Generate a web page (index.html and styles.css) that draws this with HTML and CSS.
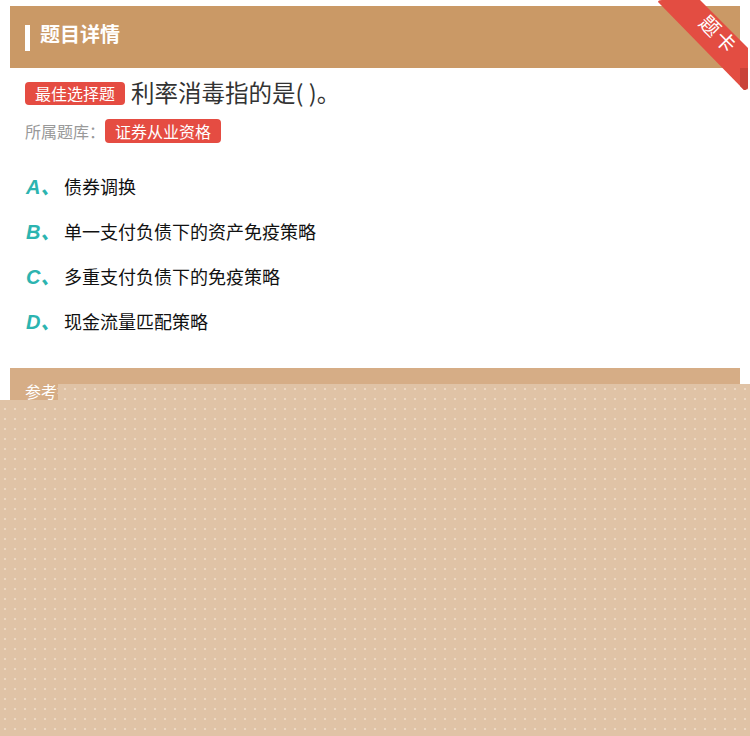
FILE: index.html
```
<!DOCTYPE html>
<html lang="zh">
<head>
<meta charset="utf-8">
<link rel="stylesheet" href="styles.css">
</head>
<body>
<div class="page">
  <div class="card-head">
    <span class="head-bar"></span>
    <span class="head-title">题目详情</span>
  </div>
  <div class="ribbon">
    <svg class="ribbon-svg" width="100" height="95" viewBox="0 0 100 95">
      <polygon points="98,66 90,68 98,90" fill="#b8372d"/>
      <path d="M8,2 Q8,0 12,0 L50,0 L98,48 L98,86 Q98,90 94,90 Z" fill="#e34d42"/>
      <path d="M90,68 L98,68 L98,86 Q98,90 94,90 L90,86 Z" fill="#c9433a"/>
    </svg>
    <span class="ribbon-text">题卡</span>
  </div>
  <div class="question">
    <div class="q-line">
      <span class="tag tag-type">最佳选择题</span>
      <span class="q-text">利率消毒指的是( )。</span>
    </div>
    <div class="bank-line">
      <span class="bank-label">所属题库：</span>
      <span class="tag tag-bank">证券从业资格</span>
    </div>
    <ul class="options">
      <li class="option"><span class="opt-letter">A、</span><span class="opt-text">债券调换</span></li>
      <li class="option"><span class="opt-letter">B、</span><span class="opt-text">单一支付负债下的资产免疫策略</span></li>
      <li class="option"><span class="opt-letter">C、</span><span class="opt-text">多重支付负债下的免疫策略</span></li>
      <li class="option"><span class="opt-letter">D、</span><span class="opt-text">现金流量匹配策略</span></li>
    </ul>
  </div>
  <div class="answer-head">
    <span class="answer-title">参考答案</span>
  </div>
</div>
<div class="mask-top"></div>
<div class="mask-bottom"></div>
</body>
</html>
```

FILE: styles.css
```
html, body {
  margin: 0;
  padding: 0;
  background: #ffffff;
  font-family: "Noto Sans CJK SC", "Liberation Sans", sans-serif;
}
.page {
  position: relative;
  width: 750px;
  height: 736px;
  padding: 6px 10px 0;
  box-sizing: border-box;
  overflow: hidden;
}
.card-head {
  height: 62px;
  background: #ca9966;
  display: flex;
  align-items: center;
  padding-left: 15px;
}
.head-bar {
  width: 5px;
  height: 26px;
  background: #ffffff;
  margin-right: 10px;
  margin-top: 1px;
}
.head-title {
  color: #ffffff;
  font-size: 20px;
  font-weight: bold;
  line-height: 25px;
  margin-bottom: 7px;
}
.ribbon {
  position: absolute;
  left: 650px;
  top: 0;
  width: 100px;
  height: 95px;
}
.ribbon-svg {
  display: block;
}
.ribbon-text {
  position: absolute;
  left: 47px;
  top: 23px;
  width: 44px;
  text-align: center;
  color: #ffffff;
  font-size: 20px;
  line-height: 22px;
  letter-spacing: 2px;
  transform: rotate(45deg);
}
.question {
  padding: 12px 15px 0;
}
.q-line {
  display: flex;
  align-items: center;
  height: 27px;
}
.tag {
  display: inline-block;
  background: #e54c42;
  color: #ffffff;
  border-radius: 4px;
  font-size: 16px;
  line-height: 23px;
  padding: 0 10px;
}
.tag-type {
  margin-right: 6px;
}
.q-text {
  font-size: 23.5px;
  color: #333333;
  line-height: 27px;
  margin-top: -3px;
}
.bank-line {
  display: flex;
  align-items: center;
  margin-top: 12px;
  height: 24px;
}
.bank-label {
  font-size: 16px;
  color: #999999;
}
.tag-bank {
  line-height: 24px;
}
.options {
  list-style: none;
  margin: 20px 0 0;
  padding: 0;
}
.option {
  display: flex;
  align-items: center;
  height: 45px;
}
.opt-letter {
  width: 38px;
  padding-left: 1px;
  font-family: "Liberation Sans", "Noto Sans CJK SC", sans-serif;
  font-style: italic;
  font-weight: bold;
  font-size: 20px;
  color: #2cb4b0;
}
.opt-text {
  font-size: 18px;
  color: #111111;
}
.answer-head {
  margin-top: 25px;
  height: 44px;
  background: #d6ad86;
  padding-left: 15px;
  padding-top: 11px;
  box-sizing: border-box;
}
.answer-title {
  color: #ffffff;
  font-size: 16px;
}
.mask-top {
  position: absolute;
  left: 58px;
  top: 384px;
  width: 692px;
  height: 16px;
  background-color: #e0c3a6;
  background-image: radial-gradient(circle, #ecd8c3 0.9px, transparent 1.3px);
  background-size: 10px 10px;
  background-position: 2px 0;
}
.mask-bottom {
  position: absolute;
  left: 0;
  top: 400px;
  width: 750px;
  height: 336px;
  background-color: #e0c3a6;
  background-image: radial-gradient(circle, #ecd8c3 0.9px, transparent 1.3px);
  background-size: 10px 10px;
  background-position: 0 -6px;
}
```
